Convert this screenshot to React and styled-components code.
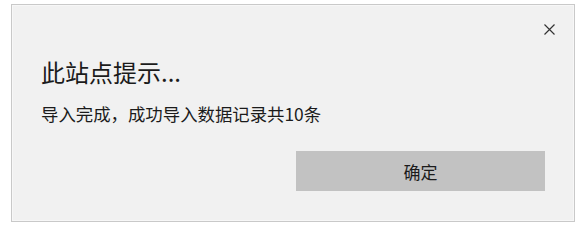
import React from "react";
import styled, { createGlobalStyle } from "styled-components";

const Global = createGlobalStyle`
  html, body { margin: 0; padding: 0; background: #ffffff; }
  body { font-family: "Noto Sans CJK SC", "Noto Sans", sans-serif; }
`;

const Page = styled.div`
  width: 587px;
  height: 229px;
  box-sizing: border-box;
  padding: 4px 12px 7px 11px;
`;

const Dialog = styled.div`
  position: relative;
  box-sizing: border-box;
  width: 100%;
  height: 100%;
  background: #f1f1f1;
  border: 1px solid #c9c9c9;
  box-shadow: inset 0 0 0 1px #f7f7f7;
  padding: 51px 29px 0 29px;
  display: flex;
  flex-direction: column;
`;

const Close = styled.button`
  position: absolute;
  top: 17px;
  right: 18px;
  width: 14px;
  height: 14px;
  padding: 0;
  border: none;
  background: transparent;
  display: flex;
  align-items: center;
  justify-content: center;
`;

const Title = styled.div`
  font-size: 24px;
  line-height: 32px;
  color: #1b1b1b;
`;

const Message = styled.div`
  margin-top: 14px;
  font-size: 17.4px;
  line-height: 24px;
  color: #1b1b1b;
`;

const Actions = styled.div`
  display: flex;
  justify-content: flex-end;
  margin-top: 25px;
  padding-right: 0;
`;

const Button = styled.button`
  width: 249px;
  height: 40px;
  border: none;
  background: #c2c2c2;
  color: #1b1b1b;
  font-family: "Noto Sans CJK SC", sans-serif;
  font-size: 17px;
  padding: 0;
`;

export default function App() {
  return (
    <>
      <Global />
      <Page>
        <Dialog>
          <Close aria-label="关闭">
            <svg width="11" height="11" viewBox="0 0 11 11">
              <path d="M0.5 0.5 L10.5 10.5 M10.5 0.5 L0.5 10.5" stroke="#333" strokeWidth="1.15" fill="none" />
            </svg>
          </Close>
          <Title>此站点提示...</Title>
          <Message>导入完成，成功导入数据记录共10条</Message>
          <Actions>
            <Button>确定</Button>
          </Actions>
        </Dialog>
      </Page>
    </>
  );
}
